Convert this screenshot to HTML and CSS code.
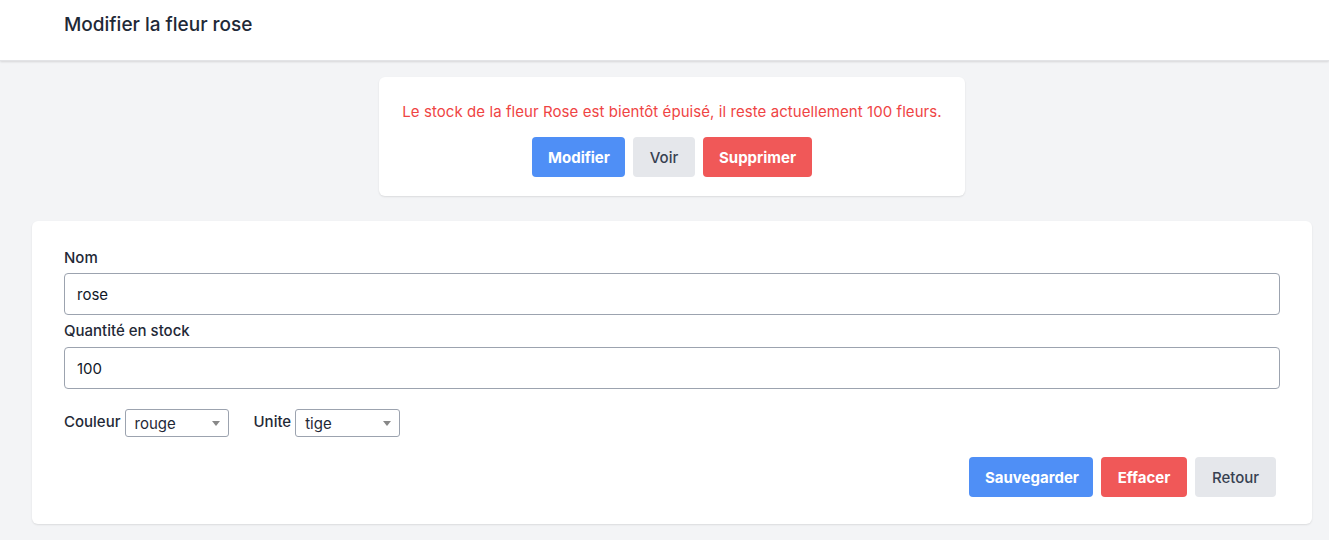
FILE: index.html
```html
<!DOCTYPE html>
<html lang="fr">
<head>
<meta charset="utf-8">
<title>Modifier la fleur rose</title>
<link rel="stylesheet" href="styles.css">
</head>
<body>
<header class="topbar">
  <div class="container">
    <h1 class="title">Modifier la fleur rose</h1>
  </div>
</header>
<main class="container main">
  <section class="alert-card">
    <p class="alert-text">Le stock de la fleur Rose est bientôt épuisé, il reste actuellement 100 fleurs.</p>
    <div class="btn-row">
      <button class="btn btn-blue">Modifier</button>
      <button class="btn btn-gray">Voir</button>
      <button class="btn btn-red">Supprimer</button>
    </div>
  </section>
  <section class="form-card">
    <label class="label" for="nom">Nom</label>
    <input class="input" id="nom" type="text" value="rose">
    <label class="label label-2" for="qte">Quantité en stock</label>
    <input class="input" id="qte" type="text" value="100">
    <div class="select-row">
      <div class="select-group">
        <span class="label-inline">Couleur</span>
        <div class="select select-couleur"><span>rouge</span><span class="caret"></span></div>
      </div>
      <div class="select-group">
        <span class="label-inline">Unite</span>
        <div class="select select-unite"><span>tige</span><span class="caret"></span></div>
      </div>
    </div>
    <div class="actions">
      <button class="btn btn-blue btn-save">Sauvegarder</button>
      <button class="btn btn-red btn-erase">Effacer</button>
      <button class="btn btn-gray btn-back">Retour</button>
    </div>
  </section>
</main>
</body>
</html>
```
FILE: styles.css
```css
* { box-sizing: border-box; }
html, body { margin: 0; padding: 0; }
body {
  background: #f3f4f6;
  font-family: Inter, "Noto Sans", "Liberation Sans", sans-serif;
  color: #1f2937;
  height: 540px;
  overflow: hidden;
}
.container {
  width: 1280px;
  margin-left: 32px;
}
.topbar {
  background: #fff;
  height: 61px;
  box-shadow: 0 1px 2px rgba(0,0,0,0.12);
  border-bottom: 1px solid #e2e3e6;
}
.topbar .container { padding: 0 32px; }
.title {
  margin: 0;
  padding-top: 12px;
  font-size: 19px;
  line-height: 26px;
  font-weight: 500;
  color: #1f2937;
}
.main {
  padding-top: 16px;
  display: flex;
  flex-direction: column;
  align-items: center;
}
.alert-card {
  background: #fff;
  width: 586px;
  border-radius: 6px;
  box-shadow: 0 1px 2px rgba(0,0,0,0.1);
  padding: 25px 0 19px;
  display: flex;
  flex-direction: column;
  align-items: center;
}
.alert-text {
  margin: 0;
  color: #ef4444;
  font-size: 15px;
  letter-spacing: 0.07px;
  line-height: 20px;
}
.btn-row {
  margin-top: 15px;
  display: flex;
  gap: 8px;
}
.btn {
  border: 0;
  height: 40px;
  border-radius: 4px;
  font-family: inherit;
  font-size: 15px;
  font-weight: 700;
  padding: 0 16px;
}
.btn-blue { background: #4f8ff6; color: #fff; }
.btn-red { background: #f05858; color: #fff; }
.btn-gray { background: #e5e7eb; color: #374151; font-weight: 500; }
.btn-row .btn-blue { width: 93px; }
.btn-row .btn-gray { width: 62px; }
.btn-row .btn-red { width: 109px; }
.form-card {
  align-self: stretch;
  margin-top: 25px;
  background: #fff;
  border-radius: 6px;
  box-shadow: 0 1px 2px rgba(0,0,0,0.1);
  padding: 25px 32px 27px;
  display: flex;
  flex-direction: column;
}
.label {
  font-size: 15px;
  line-height: 24px;
  font-weight: 500;
  color: #1f2937;
  margin-bottom: 3px;
}
.label-2 { margin-top: 4px; margin-bottom: 4px; }
.input {
  height: 42px;
  border: 1px solid #9ca3af;
  border-radius: 4px;
  padding: 0 12px;
  font-family: inherit;
  font-size: 15px;
  color: #111827;
  width: 100%;
}
.select-row {
  margin-top: 20px;
  display: flex;
  gap: 25px;
  align-items: center;
}
.select-group {
  display: flex;
  align-items: center;
  gap: 4px;
}
.label-inline {
  font-size: 15px;
  font-weight: 500;
  color: #1f2937;
  position: relative;
  top: -2px;
}
.select {
  height: 28px;
  border: 1px solid #9ca3af;
  border-radius: 3px;
  display: flex;
  align-items: center;
  justify-content: space-between;
  padding: 1px 8px 0 9px;
  font-size: 15px;
  color: #1f2937;
}
.select-couleur { width: 104px; }
.select-unite { width: 105px; }
.caret {
  width: 0; height: 0;
  border-left: 4px solid transparent;
  border-right: 4px solid transparent;
  border-top: 5px solid #888;
  margin-top: -1px;
}
.actions {
  margin-top: 20px;
  display: flex;
  justify-content: flex-end;
  gap: 8px;
  padding-right: 4px;
}
.btn-save { width: 124px; }
.btn-erase { width: 86px; }
.btn-back { width: 81px; }
```
